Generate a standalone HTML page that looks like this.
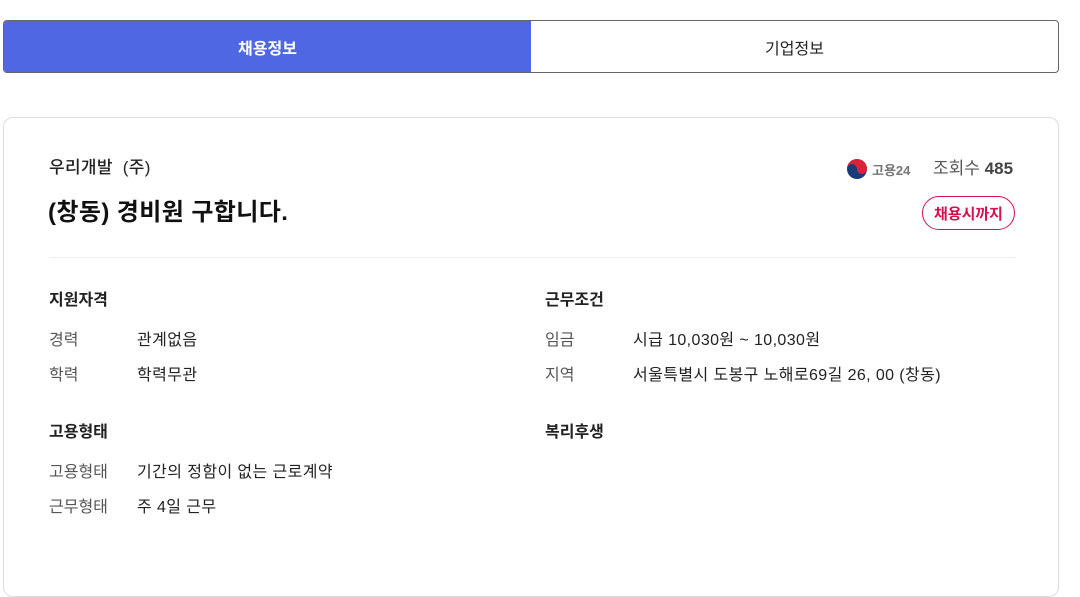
<!DOCTYPE html>
<html><head><meta charset="utf-8"><style>
*{margin:0;padding:0;box-sizing:border-box}
body{width:1080px;height:556px;background:#fff;font-family:"Liberation Sans","Noto Sans CJK KR",sans-serif;color:#222;position:relative;overflow:hidden}
.tabs{position:absolute;left:3px;top:20px;width:1056px;height:53px;display:flex;border:1px solid #666;border-radius:4px;overflow:hidden}
.tabs div{flex:1;display:flex;align-items:center;justify-content:center;font-size:16px}
.t1{background:#4f67e2;color:#fff;font-weight:bold}
.t2{color:#222}
.card{position:absolute;left:3px;top:117px;width:1056px;height:480px;border:1px solid #ddd;border-radius:10px}
.abs{position:absolute}
.co{left:45px;top:35px;font-size:17px;font-weight:500;letter-spacing:0.3px}
.ti{left:44px;top:74px;font-size:24px;font-weight:bold;color:#111;letter-spacing:0.4px}
.hr{left:45px;top:139px;width:966px;border-top:1px solid #eee}
.h{font-size:16px;font-weight:bold;color:#222}
.k{font-size:16px;color:#555}
.v{font-size:16px;color:#222;letter-spacing:0.4px}
.btn{left:918px;top:78px;width:93px;height:34px;border:1px solid #d6104e;border-radius:17px;color:#d6104e;font-size:15px;font-weight:bold;display:flex;align-items:center;justify-content:center}
</style></head><body>
<div class="tabs"><div class="t1">채용정보</div><div class="t2">기업정보</div></div>
<div class="card">
<div class="abs co">우리개발&nbsp; (주)</div>
<div class="abs ti">(창동) 경비원 구합니다.</div>
<div class="abs" style="left:842px;top:40px;display:flex;align-items:center">
<svg width="22" height="22" viewBox="0 0 22 22"><circle cx="11" cy="11" r="10" fill="#1b3a7a"/><path d="M1 11A10 10 0 0 1 21 11A5 5 0 0 1 11 11A5 5 0 0 0 1 11Z" fill="#d8233b"/></svg>
<span style="font-size:13px;font-weight:bold;color:#777;margin-left:4px">고용24</span></div>
<div class="abs" style="left:929px;top:36px;font-size:17px;color:#555">조회수 <b style="color:#444">485</b></div>
<div class="abs btn">채용시까지</div>
<div class="abs hr"></div>
<div class="abs h" style="left:45px;top:168px">지원자격</div>
<div class="abs k" style="left:45px;top:208px">경력</div><div class="abs v" style="left:133px;top:208px">관계없음</div>
<div class="abs k" style="left:45px;top:243px">학력</div><div class="abs v" style="left:133px;top:243px">학력무관</div>
<div class="abs h" style="left:45px;top:300px">고용형태</div>
<div class="abs k" style="left:45px;top:340px">고용형태</div><div class="abs v" style="left:133px;top:340px">기간의 정함이 없는 근로계약</div>
<div class="abs k" style="left:45px;top:375px">근무형태</div><div class="abs v" style="left:133px;top:375px">주 4일 근무</div>
<div class="abs h" style="left:541px;top:168px">근무조건</div>
<div class="abs k" style="left:541px;top:208px">임금</div><div class="abs v" style="left:629px;top:208px">시급 10,030원 ~ 10,030원</div>
<div class="abs k" style="left:541px;top:243px">지역</div><div class="abs v" style="left:629px;top:243px">서울특별시 도봉구 노해로69길 26, 00 (창동)</div>
<div class="abs h" style="left:541px;top:300px">복리후생</div>
</div>
</body></html>
